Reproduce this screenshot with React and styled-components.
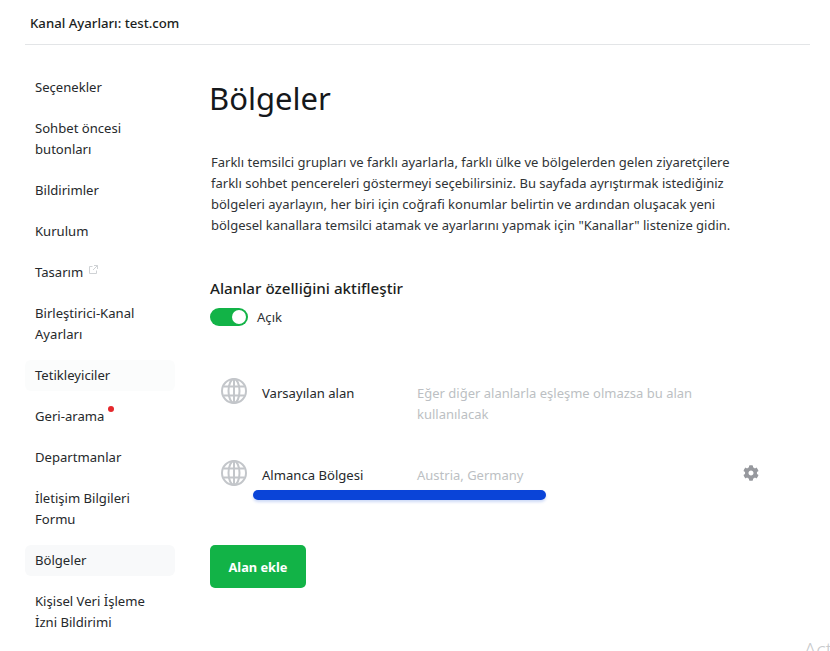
import React from "react";
import styled, { createGlobalStyle } from "styled-components";
import { FaCog } from "react-icons/fa";

const GlobalStyle = createGlobalStyle`
  html, body {
    margin: 0;
    padding: 0;
    background: #fff;
    overflow: hidden;
  }
  * { box-sizing: border-box; }
  body {
    font-family: "Noto Sans", "Open Sans", sans-serif;
    color: #1f2326;
  }
`;

const Page = styled.div`
  position: relative;
  width: 830px;
  height: 651px;
  overflow: hidden;
  padding: 0 20px 0 25px;
`;

const Header = styled.div`
  height: 45px;
  padding: 14px 0 0 5px;
  border-bottom: 1px solid #e3e5e7;
  font-size: 13.2px;
  line-height: 19px;
  font-weight: 500;
  color: #1b1e21;
`;

const Body = styled.div`
  display: flex;
`;

const Sidebar = styled.nav`
  display: flex;
  flex-direction: column;
  width: 150px;
  flex: none;
  padding-top: 22px;
  margin-right: 35px;
`;

const NavItem = styled.div`
  margin: 5px 0;
  padding: 5px 10px;
  font-size: 13.1px;
  line-height: 21px;
  color: #26292c;
  border-radius: 6px;
  background: ${(p) => (p.$tone === "strong" ? "#f8f9fa" : p.$tone === "soft" ? "#fbfcfc" : "transparent")};
`;

const NavText = styled.span`
  position: relative;
`;

const Dot = styled.span`
  position: absolute;
  top: -1px;
  right: -10px;
  width: 6px;
  height: 6px;
  border-radius: 50%;
  background: #e5282c;
`;

const ExternalIcon = styled.svg`
  margin-left: 6px;
  vertical-align: 3px;
`;

const Main = styled.main`
  flex: 1;
  min-width: 0;
`;

const Title = styled.h1`
  margin: 32px 0 0 -1px;
  font-size: 31px;
  line-height: 42px;
  font-weight: 400;
  color: #15181b;
`;

const Intro = styled.p`
  margin: 33px 0 0 1px;
  width: 530px;
  font-size: 13px;
  line-height: 21px;
  color: #2f3336;
`;

const SectionTitle = styled.h2`
  margin: 41px 0 0;
  font-size: 15.2px;
  line-height: 22px;
  font-weight: 500;
  color: #1b1e21;
`;

const ToggleRow = styled.div`
  display: flex;
  align-items: center;
  gap: 9px;
  margin-top: 9px;
  font-size: 13.1px;
  line-height: 18px;
  color: #2f3336;
`;

const Toggle = styled.span`
  display: flex;
  justify-content: flex-end;
  align-items: center;
  width: 38px;
  height: 18px;
  padding: 0 2px;
  border-radius: 9px;
  background: #12b347;
`;

const Knob = styled.span`
  width: 14px;
  height: 14px;
  border-radius: 50%;
  background: #fff;
`;

const Regions = styled.div`
  margin-top: 51px;
`;

const Region = styled.div`
  display: flex;
  align-items: flex-start;
  padding-left: 11px;
  min-height: ${(p) => p.$height}px;
`;

const Globe = styled.svg`
  flex: none;
  width: 26px;
  height: 26px;
  margin-top: 1px;
  color: #c3c6ca;
`;

const RegionName = styled.div`
  width: 155px;
  flex: none;
  margin: 6px 0 0 15px;
  font-size: 13.1px;
  line-height: 21px;
  color: #26292c;
`;

const RegionDesc = styled.div`
  width: 300px;
  flex: none;
  margin-top: 6px;
  font-size: 13px;
  line-height: 21px;
  color: #bcbfc3;
`;

const Gear = styled(FaCog)`
  width: 16px;
  height: 16px;
  margin: 6px 0 0 26px;
  color: #97999e;
`;

const Redaction = styled.div`
  position: absolute;
  left: 253px;
  top: 490px;
  width: 293px;
  height: 10px;
  border-radius: 5px;
  background: #0a44d8;
  box-shadow: 0 2px 3px rgba(10, 68, 216, 0.2);
`;

const AddButton = styled.button`
  display: block;
  width: 96px;
  height: 43px;
  margin-top: 1px;
  border: none;
  border-radius: 5px;
  background: #12b347;
  color: #fff;
  font-family: inherit;
  font-size: 12.8px;
  font-weight: 700;
`;

const Watermark = styled.div`
  position: absolute;
  left: 804px;
  top: 638px;
  font-size: 20px;
  line-height: 24px;
  font-weight: 300;
  color: #c8cacc;
  white-space: nowrap;
`;

const GlobeIcon = () => (
  <Globe viewBox="0 0 26 26" fill="none" stroke="currentColor" strokeWidth="2">
    <circle cx="13" cy="13" r="12" />
    <ellipse cx="13" cy="13" rx="5.5" ry="12" />
    <path d="M13 1v24M2.5 8.5h21M2.5 17.5h21" />
  </Globe>
);

const navItems = [
  { label: "Seçenekler" },
  { label: "Sohbet öncesi butonları" },
  { label: "Bildirimler" },
  { label: "Kurulum" },
  { label: "Tasarım", external: true },
  { label: "Birleştirici-Kanal Ayarları" },
  { label: "Tetikleyiciler", tone: "soft" },
  { label: "Geri-arama", dot: true },
  { label: "Departmanlar" },
  { label: "İletişim Bilgileri Formu" },
  { label: "Bölgeler", tone: "strong" },
  { label: "Kişisel Veri İşleme İzni Bildirimi" },
];

export default function App() {
  return (
    <Page>
      <GlobalStyle />
      <Header>Kanal Ayarları: test.com</Header>
      <Body>
        <Sidebar>
          {navItems.map((item) => (
            <NavItem key={item.label} $tone={item.tone}>
              <NavText>
                {item.label}
                {item.dot && <Dot />}
              </NavText>
              {item.external && (
                <ExternalIcon width="9" height="9" viewBox="0 0 9 9" fill="none" stroke="#cfd2d5" strokeWidth="1">
                  <path d="M3.5 1.5H.5v7h7V5.5M5 .5h3.5V4M8.5.5 4 5" />
                </ExternalIcon>
              )}
            </NavItem>
          ))}
        </Sidebar>
        <Main>
          <Title>Bölgeler</Title>
          <Intro>
            Farklı temsilci grupları ve farklı ayarlarla, farklı ülke ve bölgelerden gelen ziyaretçilere farklı sohbet
            pencereleri göstermeyi seçebilirsiniz. Bu sayfada ayrıştırmak istediğiniz bölgeleri ayarlayın, her biri için
            coğrafi konumlar belirtin ve ardından oluşacak yeni bölgesel kanallara temsilci atamak ve ayarlarını yapmak
            için "Kanallar" listenize gidin.
          </Intro>
          <SectionTitle>Alanlar özelliğini aktifleştir</SectionTitle>
          <ToggleRow>
            <Toggle>
              <Knob />
            </Toggle>
            Açık
          </ToggleRow>
          <Regions>
            <Region $height={82}>
              <GlobeIcon />
              <RegionName>Varsayılan alan</RegionName>
              <RegionDesc>Eğer diğer alanlarla eşleşme olmazsa bu alan kullanılacak</RegionDesc>
            </Region>
            <Region $height={85}>
              <GlobeIcon />
              <RegionName>Almanca Bölgesi</RegionName>
              <RegionDesc>Austria, Germany</RegionDesc>
              <Gear />
            </Region>
          </Regions>
          <AddButton>Alan ekle</AddButton>
        </Main>
      </Body>
      <Redaction />
      <Watermark>Act</Watermark>
    </Page>
  );
}
